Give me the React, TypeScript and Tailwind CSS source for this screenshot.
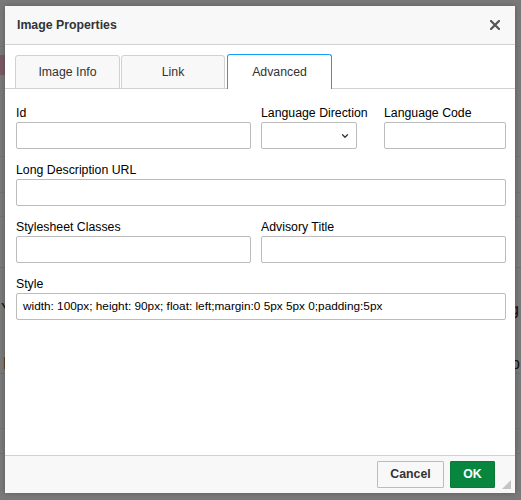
import { ChevronDown } from 'lucide-react'

const font = { fontFamily: '"Liberation Sans", Arial, Helvetica, sans-serif' }

function Field({ label, className = '', select = false, value }: { label: string; className?: string; select?: boolean; value?: string }) {
  return (
    <div className={`flex flex-col ${className}`}>
      <label className="h-[14px] mb-[2px] text-[12.3px] leading-[14px] text-black whitespace-nowrap">{label}</label>
      <div className="h-[27px] rounded-[2px] border border-[#bcbcbc] bg-white flex items-center justify-end px-[6px]">
        {select && <ChevronDown className="w-[10px] h-[10px] text-[#333]" strokeWidth={3} />}
        {value && <span className="flex-1 text-[11.8px] text-black whitespace-nowrap">{value}</span>}
      </div>
    </div>
  )
}

export default function App() {
  return (
    <div className="relative w-[521px] h-[500px] overflow-hidden bg-[#7a7a7a]" style={font}>
      {/* dimmed page behind the dialog */}
      <div className="flex flex-col">
        <div className="h-[47px] border-b border-[#727272]" />
        <div className="h-[8px]" />
        <div className="h-[20px] w-[6px] bg-[#7a5a62]" />
        <div className="h-[82px] border-b border-[#727272]" />
        <div className="h-[36px] border-b border-[#727272]" />
        <div className="h-[24px] border-b border-[#727272]" />
        <div className="h-[51px] border-b border-[#3f8f4f]" />
        <div className="h-[50px] flex justify-between items-end text-[16px] text-[#111] leading-[16px]">
          <span className="pl-[1px]">Ye</span>
          <span className="pr-[2px]">ing</span>
        </div>
        <div className="h-[56px] border-b border-[#3f8f4f] flex justify-between items-end text-[16px] text-[#111] leading-[18px]">
          <span className="pl-[3px]">In</span>
          <span className="pr-[1px]">up</span>
        </div>
        <div className="h-[55px] border-b border-[#727272]" />
        <div className="h-[25px] border-b border-[#727272]" />
      </div>

      {/* dialog */}
      <div className="absolute left-[5px] top-[6px] w-[510px] h-[487px] bg-white flex flex-col shadow-[0_0_6px_rgba(0,0,0,0.25)]">
        <div className="h-[39px] shrink-0 bg-[#f8f8f8] border-b border-[#d1d1d1] flex items-center justify-between pl-[12px] pr-[15px]">
          <span className="text-[12.3px] font-bold text-[#333]">Image Properties</span>
          <svg width="10" height="10" viewBox="0 0 10 10" className="text-[#555]">
            <path d="M1 1L9 9M9 1L1 9" stroke="currentColor" strokeWidth="2.2" strokeLinecap="square" />
          </svg>
        </div>

        <div className="mt-[9px] pl-[10px] flex items-end gap-[1px] border-b border-[#d1d1d1] h-[35px]">
          <div className="w-[105px] h-[34px] -mb-px bg-[#f8f8f8] border border-[#d1d1d1] rounded-t-[3px] flex items-center justify-center text-[12.3px] text-[#333]">
            Image Info
          </div>
          <div className="w-[104px] h-[34px] -mb-px bg-[#f8f8f8] border border-[#d1d1d1] rounded-t-[3px] flex items-center justify-center text-[12.3px] text-[#333]">
            Link
          </div>
          <div className="ml-[1px] w-[105px] h-[35px] -mb-px bg-white border-[1.5px] border-b-0 border-[#139ff7] rounded-t-[3px] flex items-center justify-center text-[12.3px] text-[#333]">
            Advanced
          </div>
        </div>

        <div className="flex-1 pt-[17px] pl-[11px] pr-[9px] flex flex-col gap-[14px]">
          <div className="flex">
            <Field label="Id" className="w-[235px]" />
            <Field label="Language Direction" className="w-[96px] ml-[10px]" select />
            <Field label="Language Code" className="w-[122px] ml-[27px]" />
          </div>
          <Field label="Long Description URL" />
          <div className="flex gap-[10px]">
            <Field label="Stylesheet Classes" className="w-[235px]" />
            <Field label="Advisory Title" className="flex-1" />
          </div>
          <Field label="Style" value="width: 100px; height: 90px; float: left;margin:0 5px 5px 0;padding:5px" />
        </div>

        <div className="relative h-[38px] shrink-0 bg-[#f8f8f8] border-t border-[#d1d1d1] flex justify-end items-start pt-[5px] pr-[20px] gap-[6px]">
          <button className="w-[67px] h-[27px] border border-[#bcbcbc] bg-[#f8f8f8] text-[12.3px] font-bold text-[#333] rounded-[1px]">
            Cancel
          </button>
          <button className="w-[45px] h-[27px] border border-[#0a7a38] bg-[#09863e] text-[12.3px] font-bold text-white rounded-[1px]">
            OK
          </button>
          <svg width="9" height="9" viewBox="0 0 9 9" className="absolute right-[4px] bottom-[4px]">
            <path d="M9 0L9 9L0 9Z" fill="#c4c4c4" />
          </svg>
        </div>
      </div>
    </div>
  )
}
